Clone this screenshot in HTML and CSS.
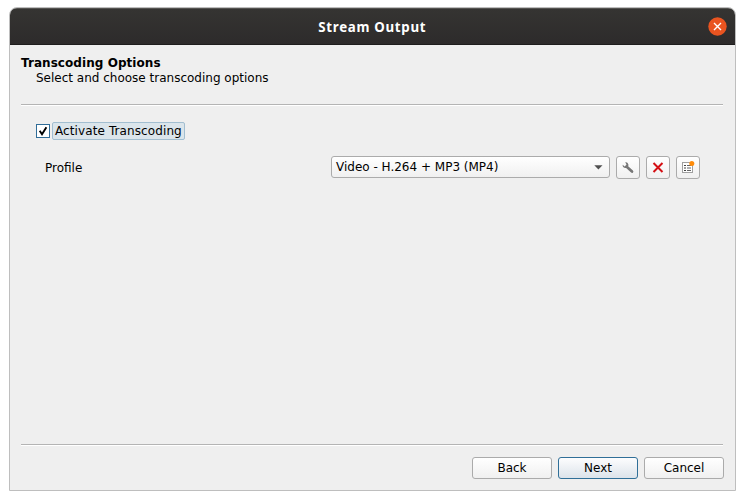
FILE: index.html
```html
<!DOCTYPE html>
<html lang="en">
<head>
<meta charset="utf-8">
<title>Stream Output</title>
<link rel="stylesheet" href="styles.css">
</head>
<body>
<div class="window">
  <header class="titlebar">
    <span></span>
    <h1 class="title">Stream Output</h1>
    <button class="close" aria-label="Close"><svg width="19" height="19" viewBox="0 0 19 19"><circle cx="9.5" cy="9.5" r="9.2" fill="#e95420"/><path d="M6 6l7 7M13 6l-7 7" stroke="#fff" stroke-width="1.4"/></svg></button>
  </header>
  <main class="body">
    <h2 class="heading">Transcoding Options</h2>
    <p class="sub">Select and choose transcoding options</p>
    <div class="rule"></div>
    <section class="content">
      <div class="check">
        <span class="box"><svg width="12" height="12" viewBox="0 0 12 12"><path d="M2.7 5.8L5 9.3L9.4 2.2" fill="none" stroke="#000" stroke-width="1.9"/></svg></span>
        <span class="check-label">Activate Transcoding</span>
      </div>
      <div class="profile">
        <span class="label">Profile</span>
        <div class="combo"><span>Video - H.264 + MP3 (MP4)</span><svg width="9" height="5" viewBox="0 0 9 5"><path d="M0.3 0.2h8.2L4.4 4.4z" fill="#505050"/></svg></div>
        <button class="tool" aria-label="Edit"><svg width="14" height="14" viewBox="0 0 14 14"><path d="M6 6L11 10.6" stroke="#777" stroke-width="2.7" stroke-linecap="round"/><path d="M4.2 1.3C6.5 1 8 3 7.3 5.1L5.2 7C3 7.4 1.2 5.8 1.7 3.8L3.7 5.4L5.5 3.6z" fill="#777"/></svg></button>
        <button class="tool" aria-label="Delete"><svg width="14" height="14" viewBox="0 0 14 14"><path d="M2.5 2l9 9M11.5 2l-9 9" stroke="#d40f14" stroke-width="2"/></svg></button>
        <button class="tool" aria-label="New"><svg width="14" height="14" viewBox="0 0 14 14"><rect x="1.5" y="1.5" width="10" height="10" fill="#fff" stroke="#a0a0a0"/><path d="M3 4.5h2M3 7h2M3 9.5h2" stroke="#444" stroke-width="1.2"/><path d="M6 4.5h4M6 7h4M6 9.5h4" stroke="#666"/><circle cx="10.8" cy="2.5" r="2.5" fill="#ff8c0a"/></svg></button>
      </div>
    </section>
    <div class="rule"></div>
    <footer class="actions">
      <button class="btn">Back</button>
      <button class="btn primary">Next</button>
      <button class="btn">Cancel</button>
    </footer>
  </main>
</div>
</body>
</html>
```
FILE: styles.css
```css
* { box-sizing: border-box; }
body {
  margin: 0;
  padding: 7px 9px;
  background: #fff;
  color: #000;
  font: 12px/15px "DejaVu Sans", sans-serif;
}
h1, h2, p { margin: 0; }
button { font: inherit; color: inherit; margin: 0; padding: 0; }
svg { display: block; }
.window {
  display: flex;
  flex-direction: column;
  width: 727px;
  height: 484px;
  border: 1px solid #bebebe;
  border-radius: 8px 8px 0 0;
  background: #efefef;
  overflow: hidden;
}
.titlebar {
  display: grid;
  grid-template-columns: 1fr auto 1fr;
  align-items: center;
  height: 37px;
  padding: 0 8.5px 1px 8px;
  background: linear-gradient(#353432, #2d2b2b);
  border-top: 1px solid #545350;
  border-bottom: 1px solid #1e1d1d;
}
.title {
  padding-top: 2px;
  color: #fff;
  font: bold 13.3px/18px "Noto Sans", sans-serif;
  letter-spacing: 0.7px;
}
.close { justify-self: end; border: 0; background: none; }
.body {
  flex: 1;
  display: flex;
  flex-direction: column;
  padding: 11px 11px 11px;
}
.heading { font-size: 12px; line-height: 15px; letter-spacing: 0.06px; }
.sub { padding-left: 15px; }
.rule {
  height: 2px;
  margin-top: 18px;
  margin-right: 1px;
  border-top: 1px solid #b4b4b4;
  background: #fff;
}
.content { flex: 1; padding: 16px 24px 0 15px; }
.check { display: flex; align-items: center; gap: 2px; height: 18px; }
.box { width: 14px; height: 14px; border: 1px solid #306d98; background: #fff; }
.check-label {
  width: 133px;
  height: 18px;
  padding: 0 2px;
  border: 1px solid #a2bed0;
  border-radius: 2px;
  background: #dbe5eb;
  line-height: 16px;
  letter-spacing: 0.1px;
}
.profile { display: flex; align-items: flex-start; gap: 6px; margin-top: 16px; }
.label { flex: 1; padding: 5px 0 0 9px; }
.combo, .tool, .btn {
  border: 1px solid #ababab;
  border-radius: 3px;
  background: linear-gradient(#fff, #f0f0f0);
}
.combo {
  display: flex;
  align-items: center;
  justify-content: space-between;
  width: 279px;
  height: 22px;
  padding: 0 6px 0 4px;
}
.tool { display: flex; align-items: center; justify-content: center; width: 24px; height: 23px; }
.content + .rule { margin-top: 0; }
.actions { display: flex; justify-content: flex-end; gap: 6px; padding-top: 11px; }
.btn { width: 80px; height: 22px; }
.primary { border-color: #306f98; background: linear-gradient(#fdfdfe, #dce3ea); }
```
